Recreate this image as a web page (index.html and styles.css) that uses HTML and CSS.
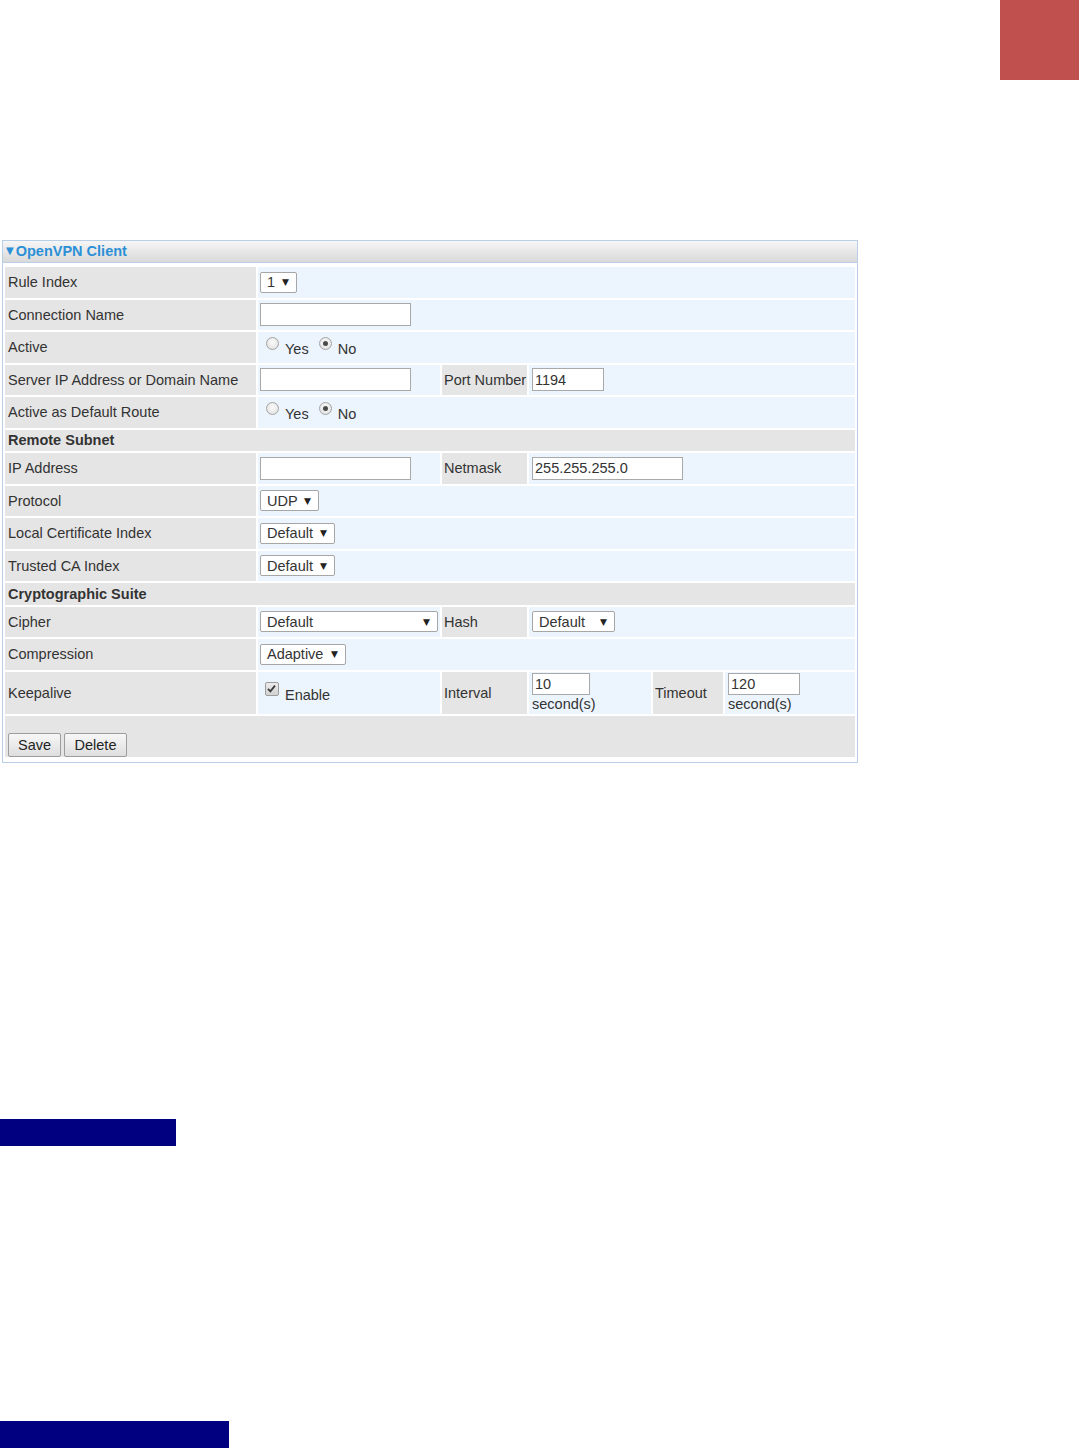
FILE: index.html
```html
<!DOCTYPE html>
<html>
<head>
<meta charset="utf-8">
<title>OpenVPN Client</title>
<link rel="stylesheet" href="styles.css">
</head>
<body>
<div class="page">
  <div class="topbar"><div class="tab"></div></div>

  <section class="panel">
    <div class="panel-head"><span class="caret">▼</span>OpenVPN Client</div>
    <table class="form">
      <colgroup>
        <col class="c1"><col class="c2"><col class="c3"><col class="c4"><col class="c5"><col class="c6">
      </colgroup>
      <tr>
        <th>Rule Index</th>
        <td colspan="5"><span class="sel w-rule">1<i>▼</i></span></td>
      </tr>
      <tr>
        <th>Connection Name</th>
        <td colspan="5"><input class="txt w-long" type="text" value=""></td>
      </tr>
      <tr>
        <th>Active</th>
        <td colspan="5" class="radios">
          <span class="radio"></span><span class="rlabel">Yes</span><span class="radio on"></span><span class="rlabel">No</span>
        </td>
      </tr>
      <tr>
        <th>Server IP Address or Domain Name</th>
        <td><input class="txt w-long" type="text" value=""></td>
        <th class="sub">Port Number</th>
        <td colspan="3" class="pad3"><input class="txt w-port" type="text" value="1194"></td>
      </tr>
      <tr>
        <th>Active as Default Route</th>
        <td colspan="5" class="radios">
          <span class="radio"></span><span class="rlabel">Yes</span><span class="radio on"></span><span class="rlabel">No</span>
        </td>
      </tr>
      <tr class="section"><td colspan="6">Remote Subnet</td></tr>
      <tr>
        <th>IP Address</th>
        <td><input class="txt w-long" type="text" value=""></td>
        <th class="sub">Netmask</th>
        <td colspan="3" class="pad3"><input class="txt w-long" type="text" value="255.255.255.0"></td>
      </tr>
      <tr>
        <th>Protocol</th>
        <td colspan="5"><span class="sel w-udp">UDP<i>▼</i></span></td>
      </tr>
      <tr>
        <th>Local Certificate Index</th>
        <td colspan="5"><span class="sel w-def">Default<i>▼</i></span></td>
      </tr>
      <tr>
        <th>Trusted CA Index</th>
        <td colspan="5"><span class="sel w-def">Default<i>▼</i></span></td>
      </tr>
      <tr class="section"><td colspan="6">Cryptographic Suite</td></tr>
      <tr>
        <th>Cipher</th>
        <td><span class="sel w-cipher">Default<i>▼</i></span></td>
        <th class="sub">Hash</th>
        <td colspan="3" class="pad3"><span class="sel w-hash">Default<i>▼</i></span></td>
      </tr>
      <tr>
        <th>Compression</th>
        <td colspan="5"><span class="sel w-adapt">Adaptive<i>▼</i></span></td>
      </tr>
      <tr class="tall">
        <th>Keepalive</th>
        <td class="check-cell"><span class="check"><svg viewBox="0 0 13 13" width="13" height="13"><path d="M3 6.8 L5.4 9.3 L10 3.6" fill="none" stroke="#3c3c3c" stroke-width="1.8"/></svg></span><span class="rlabel">Enable</span></td>
        <th class="sub">Interval</th>
        <td class="pad3 stack"><input class="txt w-int" type="text" value="10"><div class="unit">second(s)</div></td>
        <th class="sub">Timeout</th>
        <td class="pad3 stack"><input class="txt w-tmo" type="text" value="120"><div class="unit">second(s)</div></td>
      </tr>
      <tr class="buttons">
        <td colspan="6"><button class="btn b-save">Save</button><button class="btn b-del">Delete</button></td>
      </tr>
    </table>
  </section>

  <div class="navbar nb1"></div>
  <div class="navbar nb2"></div>
</div>
</body>
</html>
```

FILE: styles.css
```css
html, body {
  margin: 0;
  padding: 0;
  background: #ffffff;
}

body {
  font-family: "Liberation Sans", Arial, sans-serif;
  font-size: 14.5px;
  color: #333333;
}

.page {
  width: 1079px;
  height: 1448px;
  overflow: hidden;
}

.topbar {
  height: 80px;
  display: flex;
  justify-content: flex-end;
}

.tab {
  width: 79px;
  height: 80px;
  background: #c0504d;
}

.panel {
  margin: 160px 0 0 2px;
  width: 856px;
  box-sizing: border-box;
  border: 1px solid #b9cfe6;
  padding-bottom: 3px;
}

.panel-head {
  height: 21px;
  line-height: 20px;
  border-bottom: 1px solid #b9cfe6;
  background: linear-gradient(#f6f6f6, #d9d9d9);
  color: #2b90d6;
  font-weight: bold;
  font-size: 14.5px;
  padding-left: 3px;
}

.caret {
  display: inline-block;
  font-family: "DejaVu Sans", sans-serif;
  font-size: 10px;
  vertical-align: 2px;
  margin-right: 2px;
  color: #2b90d6;
}

.form {
  margin-top: 2px;
  width: 854px;
  table-layout: fixed;
  border-collapse: separate;
  border-spacing: 2px;
}

.c1 { width: 251px; }
.c2 { width: 182px; }
.c3 { width: 85px; }
.c4 { width: 122px; }
.c5 { width: 70px; }
.c6 { width: 130px; }

.form th,
.form td {
  height: 30.5px;
  padding: 0 2px;
  box-sizing: border-box;
  vertical-align: middle;
  font-size: 14.5px;
  white-space: nowrap;
}

.form th {
  background: #e5e5e5;
  font-weight: normal;
  text-align: left;
  padding-left: 3px;
  color: #333333;
}

.form th.sub {
  padding-left: 2px;
}

.form td {
  background: #ecf4fd;
}

.form td.pad3 {
  padding-left: 3px;
}

.form tr.section td {
  height: 21.5px;
  background: #e5e5e5;
  font-weight: bold;
  padding-left: 3px;
  color: #333333;
}

.form tr.tall th,
.form tr.tall td {
  height: 42px;
}

.form tr.buttons td {
  height: 41px;
  background: #e5e5e5;
  vertical-align: bottom;
  padding: 0 0 0 3px;
}

.txt {
  box-sizing: border-box;
  height: 23px;
  border: 1px solid #a9a9a9;
  background: #ffffff;
  font-family: "Liberation Sans", Arial, sans-serif;
  font-size: 14.5px;
  color: #333333;
  padding: 0 2px;
  margin: 0;
  vertical-align: middle;
  outline: none;
}

.w-long { width: 151px; }
.w-port { width: 72px; }
.w-int { width: 58px; height: 22px; }
.w-tmo { width: 72px; height: 22px; }

.sel {
  box-sizing: border-box;
  display: inline-flex;
  align-items: center;
  justify-content: space-between;
  height: 21px;
  border: 1px solid #a6a6a6;
  border-radius: 2px;
  background: #ffffff;
  padding: 0 7px 0 6px;
  color: #333333;
  vertical-align: middle;
}

.sel i {
  font-style: normal;
  font-size: 9px;
  color: #222222;
  font-family: "DejaVu Sans", sans-serif;
}

.w-rule { width: 37px; }
.w-udp { width: 59px; }
.w-def { width: 75px; }
.w-cipher { width: 178px; }
.w-hash { width: 83px; }
.w-adapt { width: 86px; }

.radios {
  padding-left: 8px !important;
}

.radio {
  display: inline-block;
  box-sizing: border-box;
  width: 13px;
  height: 13px;
  border-radius: 50%;
  border: 1px solid #a4a4a4;
  background: radial-gradient(circle at 50% 40%, #fbfbfb, #dcdcdc);
  vertical-align: 1px;
  position: relative;
}

.radio.on::after {
  content: "";
  position: absolute;
  left: 3px;
  top: 3px;
  width: 5px;
  height: 5px;
  border-radius: 50%;
  background: #4a4a4a;
}

.rlabel {
  display: inline-block;
  margin: 4px 10px 0 6px;
  vertical-align: middle;
}

.check-cell {
  padding-left: 7px !important;
}

.check {
  display: inline-block;
  box-sizing: border-box;
  width: 14px;
  height: 14px;
  border: 1px solid #9c9c9c;
  border-radius: 2px;
  background: linear-gradient(#ececec, #d2d2d2);
  vertical-align: 1px;
  line-height: 0;
}

.check svg {
  margin: -1px 0 0 -1px;
}

.stack {
  vertical-align: top !important;
  padding-top: 1px !important;
}

.unit {
  line-height: 17px;
  margin-top: 1px;
}

.btn {
  box-sizing: border-box;
  height: 24px;
  padding: 0;
  margin: 0 3px 0 0;
  border: 1px solid #9d9d9d;
  border-radius: 2px;
  background: linear-gradient(#f7f7f7, #dedede);
  font-family: "Liberation Sans", Arial, sans-serif;
  font-size: 14.5px;
  color: #222222;
  vertical-align: bottom;
  text-align: center;
}

.b-save { width: 53px; }
.b-del { width: 63px; }

.navbar {
  background: #000080;
  height: 27px;
}

.nb1 {
  width: 176px;
  margin-top: 356px;
}

.nb2 {
  width: 229px;
  margin-top: 275px;
}
```
